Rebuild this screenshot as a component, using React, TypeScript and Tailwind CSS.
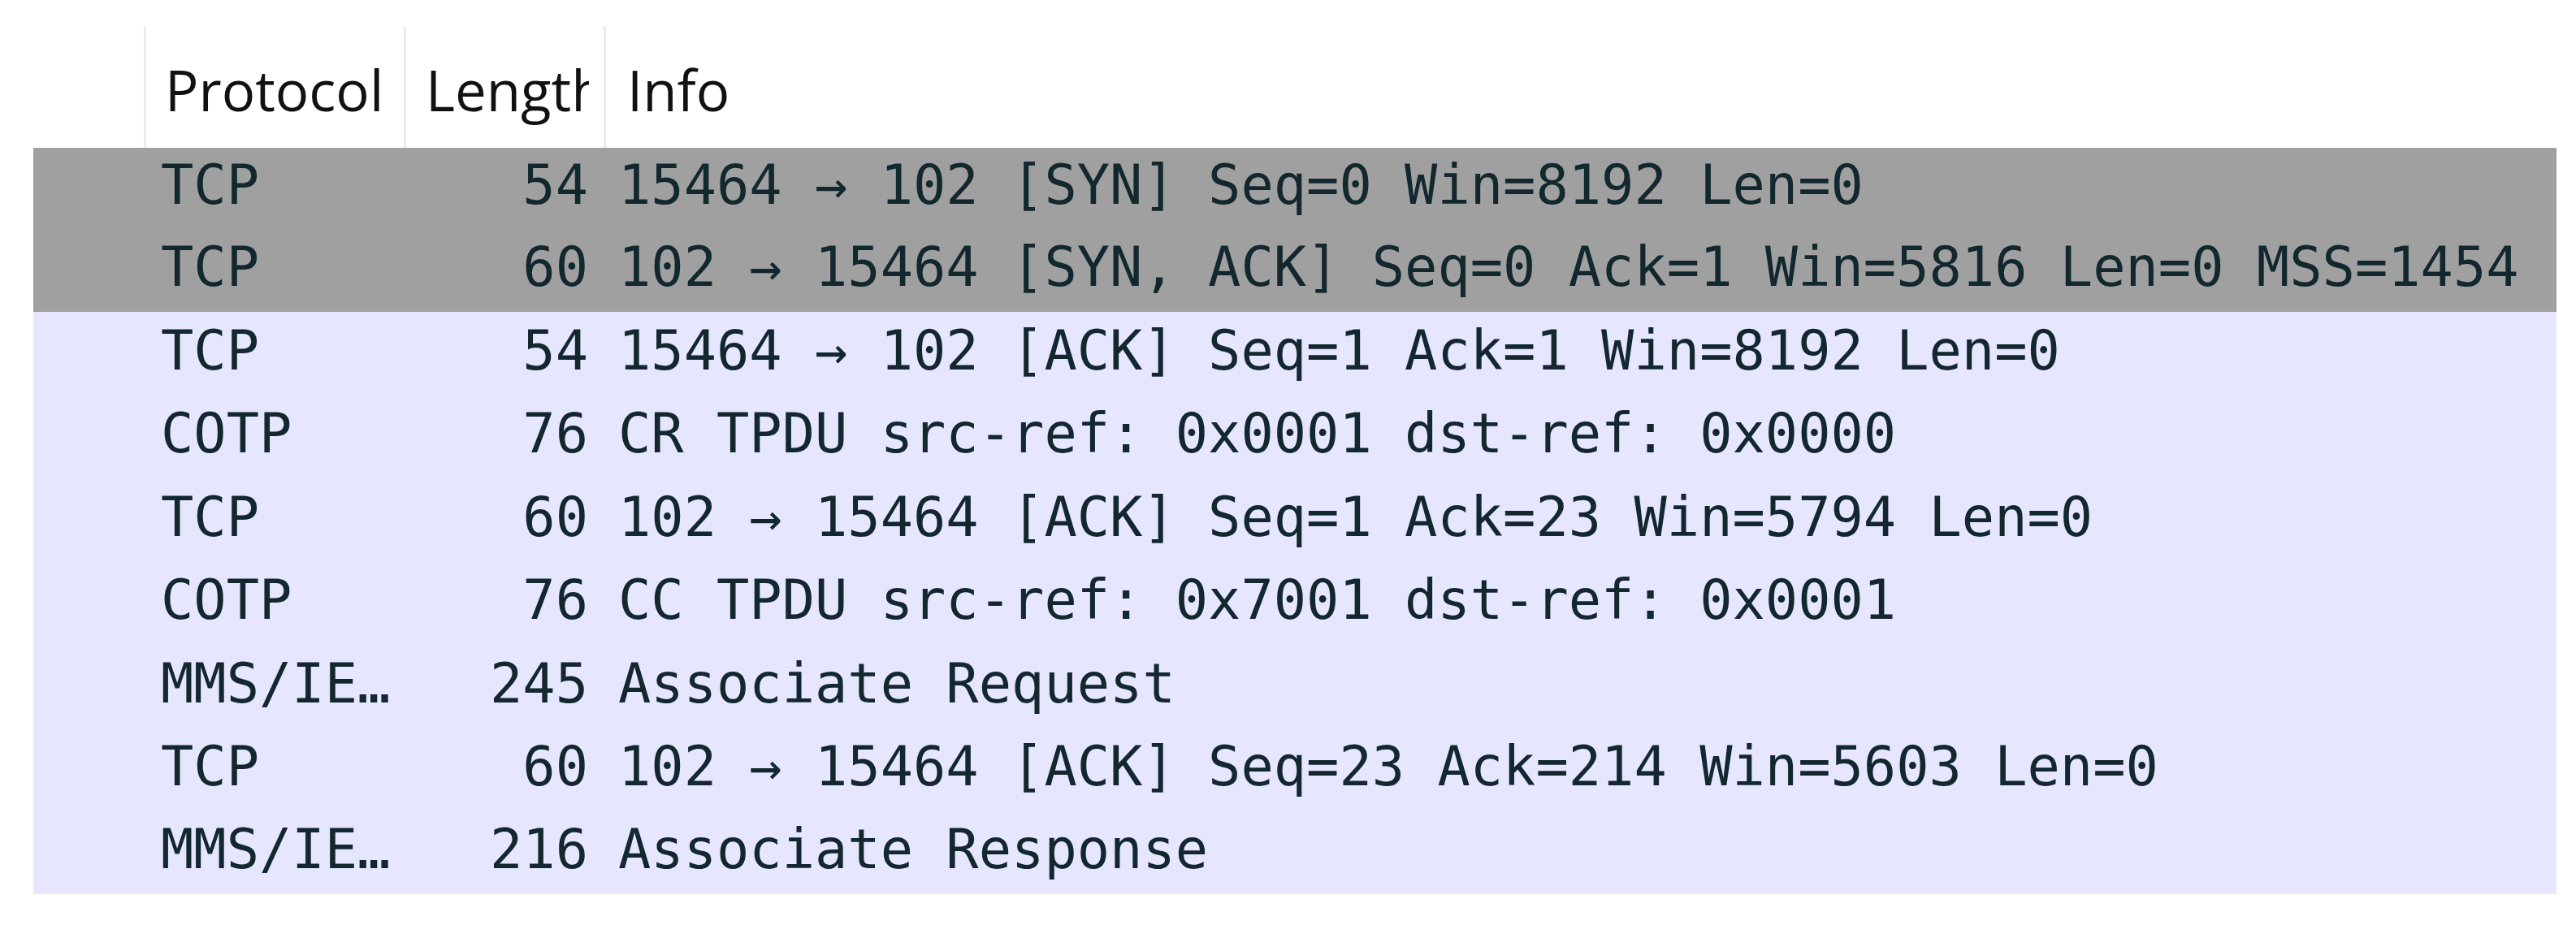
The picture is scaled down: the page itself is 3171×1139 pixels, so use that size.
type Packet = {
  protocol: string;
  length: string;
  info: string;
  selected?: boolean;
};

const packets: Packet[] = [
  { protocol: "TCP", length: "54", info: "15464 → 102 [SYN] Seq=0 Win=8192 Len=0", selected: true },
  { protocol: "TCP", length: "60", info: "102 → 15464 [SYN, ACK] Seq=0 Ack=1 Win=5816 Len=0 MSS=1454", selected: true },
  { protocol: "TCP", length: "54", info: "15464 → 102 [ACK] Seq=1 Ack=1 Win=8192 Len=0" },
  { protocol: "COTP", length: "76", info: "CR TPDU src-ref: 0x0001 dst-ref: 0x0000" },
  { protocol: "TCP", length: "60", info: "102 → 15464 [ACK] Seq=1 Ack=23 Win=5794 Len=0" },
  { protocol: "COTP", length: "76", info: "CC TPDU src-ref: 0x7001 dst-ref: 0x0001" },
  { protocol: "MMS/IE…", length: "245", info: "Associate Request" },
  { protocol: "TCP", length: "60", info: "102 → 15464 [ACK] Seq=23 Ack=214 Win=5603 Len=0" },
  { protocol: "MMS/IE…", length: "216", info: "Associate Response" },
];

function PacketRow(props: { packet: Packet }) {
  const p = props.packet;
  return (
    <div
      className={
        p.selected
          ? "flex h-[101px] leading-[93px] bg-[#a0a0a0]"
          : "flex h-[102.4px] leading-[96px] bg-[#e7e6ff]"
      }
    >
      <div className="w-[136px] shrink-0" />
      <div className="w-[320px] shrink-0 pl-[21px] overflow-hidden whitespace-pre">{p.protocol}</div>
      <div className="w-[246px] shrink-0 pr-[19px] text-right whitespace-pre">{p.length}</div>
      <div className="flex-1 pl-[18px] whitespace-pre overflow-hidden">{p.info}</div>
    </div>
  );
}

export default function App() {
  const selected = packets.filter((p) => p.selected);
  const rest = packets.filter((p) => !p.selected);

  return (
    <div className="w-[3171px] h-[1139px] bg-white pt-[32px] pl-[41px] overflow-hidden">
      <div className="w-[3106px]">
        {/* column headers, Length is clipped like in the original */}
        <div className="flex h-[150px] leading-[156px] text-[69px] text-[#111] font-['Open_Sans',sans-serif]">
          <div className="w-[136px] shrink-0" />
          <div className="w-[320px] shrink-0 border-l-[3px] border-[#ececec] pl-[23px] overflow-hidden whitespace-nowrap">
            Protocol
          </div>
          <div className="w-[246px] shrink-0 border-l-[3px] border-[#ececec] pl-[24px] pr-[18px] overflow-hidden whitespace-nowrap">
            <div className="overflow-hidden">Length</div>
          </div>
          <div className="flex-1 border-l-[3px] border-[#ececec] pl-[26px] whitespace-nowrap">Info</div>
        </div>

        {/* packet list */}
        <div className="text-[67px] text-[#12272e] font-['DejaVu_Sans_Mono',monospace]">
          <div className="shadow-[inset_0_3px_0_#d6d6d6]">
            {selected.map((p, i) => (
              <PacketRow key={i} packet={p} />
            ))}
          </div>
          <div className="shadow-[inset_0_2px_0_#c9c8dc]">
            {rest.map((p, i) => (
              <PacketRow key={i} packet={p} />
            ))}
          </div>
        </div>
      </div>
    </div>
  );
}
